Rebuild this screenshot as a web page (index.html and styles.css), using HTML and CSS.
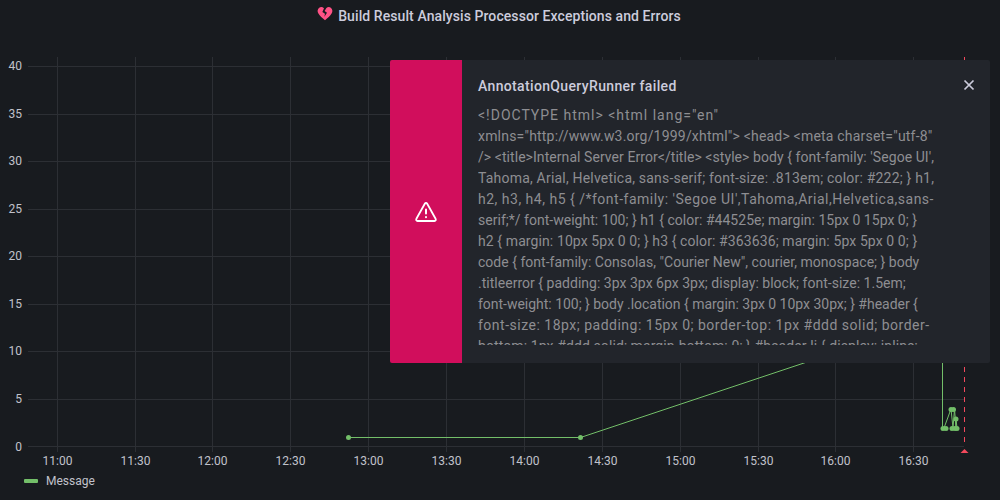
FILE: index.html
```html
<!DOCTYPE html>
<html lang="en">

<head>
  <meta charset="UTF-8">
  <meta name="viewport" content="width=device-width, initial-scale=1.0">
  <title>Build Result Analysis Processor Exceptions and Errors</title>
  <link rel="stylesheet" href="styles.css">
</head>

<body>

  <div class="panel">
    <div class="panel-title">
      <svg class="title-icon" width="16" height="16" viewBox="0 0 16 16">
        <path fill="#ff5286" d="M7 2.200 C5.600 .9 3.600 .7 2.200 1.700 C.4 3 .1 5.500 1.400 7.600 C2.800 9.800 5.300 12.300 8 14.200 C10.700 12.300 13.200 9.800 14.600 7.600 C15.900 5.500 15.600 3 13.800 1.700 C12.500 .8 10.700 .9 9.400 2 L7.600 5 L10 6.800 L7.400 10.800 L8 7.800 L5.400 6 Z" />
      </svg>
      <span>Build Result Analysis Processor Exceptions and Errors</span>
    </div>

    <svg class="chart" width="1000" height="444" viewBox="0 28 1000 444">
      <g class="grid">
        <path d="M28 66.500H964M28 114.500H964M28 161.500H964M28 209.500H964M28 256.500H964M28 304.500H964M28 351.500H964M28 399.500H964M28 446.500H964" />
        <path d="M57.500 57V452M135.500 57V452M212.500 57V452M290.500 57V452M368.500 57V452M446.500 57V452M524.500 57V452M602.500 57V452M680.500 57V452M758.500 57V452M835.500 57V452M913.500 57V452" />
      </g>

      <g class="y-labels">
        <text x="22" y="70">40</text>
        <text x="22" y="118">35</text>
        <text x="22" y="165">30</text>
        <text x="22" y="213">25</text>
        <text x="22" y="260">20</text>
        <text x="22" y="308">15</text>
        <text x="22" y="355">10</text>
        <text x="22" y="403">5</text>
        <text x="22" y="451">0</text>
      </g>

      <g class="x-labels">
        <text x="57.500" y="465">11:00</text>
        <text x="135.500" y="465">11:30</text>
        <text x="212.500" y="465">12:00</text>
        <text x="290.500" y="465">12:30</text>
        <text x="368.500" y="465">13:00</text>
        <text x="446.500" y="465">13:30</text>
        <text x="524.500" y="465">14:00</text>
        <text x="602.500" y="465">14:30</text>
        <text x="680.500" y="465">15:00</text>
        <text x="758.500" y="465">15:30</text>
        <text x="835.500" y="465">16:00</text>
        <text x="913.500" y="465">16:30</text>
      </g>

      <path class="now-line" d="M964.500 57V447" />
      <path class="now-mark" d="M960.500 453L964.500 449L968.500 453Z" />

      <g class="series">
        <polyline points="348.500,437.500 580.500,437.500 810,361" />
        <polyline points="942.500,340 942.500,428 944,428 951,409 953,428 954.500,409 956,428 956,419 957,428" />
        <circle cx="348.500" cy="437.500" r="2.500" />
        <circle cx="580.500" cy="437.500" r="2.500" />
        <circle cx="943" cy="428.500" r="2.500" />
        <circle cx="946" cy="428.500" r="2.500" />
        <circle cx="951" cy="409.500" r="2.500" />
        <circle cx="953.500" cy="409.500" r="2.500" />
        <circle cx="952" cy="428.500" r="2.500" />
        <circle cx="955" cy="428.500" r="2.500" />
        <circle cx="956" cy="419" r="2.500" />
        <circle cx="957" cy="428.500" r="2.500" />
      </g>
    </svg>

    <div class="legend">
      <span class="legend-line"></span>
      <span>Message</span>
    </div>
  </div>

  <div class="alert">
    <div class="alert-icon">
      <svg width="24" height="24" viewBox="0 0 24 24">
        <path fill="none" stroke="#fff" stroke-width="1.800" stroke-linejoin="round" d="M12 3 Q12.800 3 13.200 3.800 L21.600 18.800 Q22.400 20.800 20.400 21 H3.600 Q1.600 20.800 2.400 18.800 L10.800 3.800 Q11.200 3 12 3 Z" />
        <path fill="none" stroke="#fff" stroke-width="2" stroke-linecap="round" d="M12 9.500V13.500M12 17V17.200" />
      </svg>
    </div>
    <div class="alert-body">
      <div class="alert-title">AnnotationQueryRunner failed</div>
      <div class="alert-text">
        <span class="line widest">&lt;!DOCTYPE html&gt; &lt;html lang="en"</span>
        <span class="line normal">xmlns="http://www.w3.org/1999/xhtml"&gt; &lt;head&gt; &lt;meta charset="utf-8"</span>
        <span class="line snug">/&gt; &lt;title&gt;Internal Server Error&lt;/title&gt; &lt;style&gt; body { font-family: 'Segoe UI',</span>
        <span class="line normal">Tahoma, Arial, Helvetica, sans-serif; font-size: .813em; color: #222; } h1,</span>
        <span class="line wide">h2, h3, h4, h5 { /*font-family: 'Segoe UI',Tahoma,Arial,Helvetica,sans-</span>
        <span class="line tight">serif;*/ font-weight: 100; } h1 { color: #44525e; margin: 15px 0 15px 0; }</span>
        <span class="line mid">h2 { margin: 10px 5px 0 0; } h3 { color: #363636; margin: 5px 5px 0 0; }</span>
        <span class="line tight">code { font-family: Consolas, "Courier New", courier, monospace; } body</span>
        <span class="line tight">.titleerror { padding: 3px 3px 6px 3px; display: block; font-size: 1.5em;</span>
        <span class="line tighter">font-weight: 100; } body .location { margin: 3px 0 10px 30px; } #header {</span>
        <span class="line wide">font-size: 18px; padding: 15px 0; border-top: 1px #ddd solid; border-</span>
        <span class="line mid">bottom: 1px #ddd solid; margin-bottom: 0; } #header li { display: inline;</span>
      </div>
    </div>
    <svg class="alert-close" width="12" height="12" viewBox="0 0 12 12">
      <path stroke="#ccccdc" stroke-width="1.700" d="M1.500 1.500L10.500 10.500M10.500 1.500L1.500 10.500" />
    </svg>
  </div>

</body>

</html>
```

FILE: styles.css
```css
body {
  margin: 0;
  width: 1000px;
  height: 500px;
  overflow: hidden;
  position: relative;
  background: #181b1f;
  font-family: Roboto, sans-serif;
  color: #ccccdc;
}

.panel-title {
  height: 28px;
  display: flex;
  align-items: center;
  justify-content: center;
  gap: 5px;
  padding-top: 4px;
  padding-right: 2px;
  box-sizing: border-box;
  font-size: 14px;
  font-weight: 500;
  letter-spacing: 0.08px;
}

.title-icon {
  margin-top: -4px;
}

.chart {
  display: block;
}

.grid path {
  fill: none;
  stroke: #2c2f34;
  stroke-width: 1;
}

.y-labels text,
.x-labels text {
  font-size: 12px;
  fill: #c1c2cb;
}

.y-labels text {
  text-anchor: end;
}

.x-labels text {
  text-anchor: middle;
}

.now-line {
  fill: none;
  stroke: #f2495c;
  stroke-width: 1;
  stroke-dasharray: 5 5;
}

.now-mark {
  fill: #f2495c;
}

.series polyline {
  fill: none;
  stroke: #73bf69;
  stroke-width: 1;
}

.series circle {
  fill: #73bf69;
}

.legend {
  display: flex;
  align-items: center;
  gap: 8px;
  padding: 2px 0 0 24px;
  font-size: 12px;
  color: #c1c2cb;
}

.legend-line {
  width: 14px;
  height: 4px;
  border-radius: 1px;
  background: #73bf69;
}

.alert {
  position: absolute;
  left: 390px;
  top: 60px;
  width: 600px;
  height: 303px;
  display: flex;
  background: #22252b;
  border-radius: 2px;
  overflow: hidden;
}

.alert-icon {
  width: 72px;
  flex-shrink: 0;
  display: flex;
  align-items: center;
  justify-content: center;
  background: #d10e5c;
}

.alert-body {
  padding: 16px 48px 0 16px;
  min-width: 0;
}

.alert-title {
  font-size: 14px;
  font-weight: 500;
  line-height: 21px;
  margin-bottom: 8px;
  letter-spacing: 0.35px;
  color: #ccccdc;
}

.alert-text {
  height: 240px;
  overflow: hidden;
  font-size: 14px;
  line-height: 21px;
  color: #8e8e92;
}

.line {
  display: block;
  white-space: nowrap;
}

.tighter {
  letter-spacing: -0.02px;
}

.tight {
  letter-spacing: 0.02px;
}

.snug {
  letter-spacing: 0.06px;
}

.mid {
  letter-spacing: 0.1px;
}

.normal {
  letter-spacing: 0.2px;
}

.wide {
  letter-spacing: 0.5px;
}

.widest {
  letter-spacing: 0.99px;
}

.alert-close {
  position: absolute;
  right: 15px;
  top: 19px;
}
```
